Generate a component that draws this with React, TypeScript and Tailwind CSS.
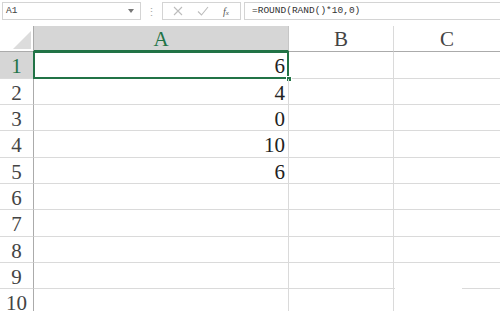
import { ReactNode } from 'react';

const ROW_HEIGHTS = [27, 26, 26, 27, 26, 26, 27, 26, 26, 27];
const VALUES: Record<number, string> = { 1: '6', 2: '4', 3: '0', 4: '10', 5: '6' };

const serif = { fontFamily: '"Liberation Serif", "Noto Sans CJK SC", serif' };
const mono = { fontFamily: '"Liberation Mono", "DejaVu Sans Mono", monospace' };

function Cell({ children, className = '' }: { children?: ReactNode; className?: string }) {
  return <div className={`border-r border-b border-[#dadada] ${className}`}>{children}</div>;
}

export default function App() {
  return (
    <div className="relative w-[500px] h-[311px] overflow-hidden bg-white text-[#333]">
      {/* formula bar */}
      <div className="flex items-center h-[26px] pt-[2px] pb-[6px] pl-[2px]">
        <div className="flex items-center justify-between w-[139px] h-[18px] border border-[#d4d4d4] px-[3px]">
          <span className="text-[9.5px] text-[#444]" style={mono}>A1</span>
          <svg width="6" height="4" viewBox="0 0 6 4" className="mr-[3px]">
            <path d="M0 0h6L3 4z" fill="#777" />
          </svg>
        </div>
        <div className="w-[21px] flex justify-center text-[#aaa] text-[11px] leading-none">⋮</div>
        <div className="flex items-center w-[79px] h-[18px] border border-[#d4d4d4] text-[#c2c2c2]">
          <svg width="10" height="10" viewBox="0 0 10 10" className="ml-[10px]">
            <path d="M1 1l8 8M9 1l-8 8" stroke="#bdbdbd" strokeWidth="1.1" />
          </svg>
          <svg width="12" height="10" viewBox="0 0 12 10" className="ml-[14px]">
            <path d="M1 5.5l3.5 3.5L11 1" stroke="#bdbdbd" strokeWidth="1.1" fill="none" />
          </svg>
          <span className="ml-[14px] text-[10px] italic text-[#555]" style={serif}>
            f<span className="text-[7px]">x</span>
          </span>
        </div>
        <div className="ml-[3px] flex-1 h-[18px] border border-[#d4d4d4] border-r-0 flex items-center pl-[7px]">
          <span className="text-[9.5px] text-[#333]" style={mono}>=ROUND(RAND()*10,0)</span>
        </div>
      </div>

      {/* sheet */}
      <div className="grid grid-cols-[34px_255px_105px_106px] leading-none" style={serif}>
        {/* corner */}
        <div className="relative h-[26px] border-r border-b border-[#ababab] bg-white">
          <svg width="18" height="18" viewBox="0 0 18 18" className="absolute right-[2px] bottom-[2px]">
            <path d="M18 0v18H0z" fill="#dcdcdc" />
          </svg>
        </div>
        <div className="h-[26px] pt-[2px] bg-[#d6d6d6] border-r border-[#c6c6c6] border-b-2 border-b-[#217346] flex items-center justify-center text-[21px] text-[#217346]">
          A
        </div>
        <div className="h-[26px] pt-[2px] bg-white border-r border-[#dadada] border-b border-b-[#ababab] flex items-center justify-center text-[21px] text-[#444]">
          B
        </div>
        <div className="h-[26px] pt-[2px] bg-white border-b border-b-[#ababab] flex items-center justify-center text-[21px] text-[#444]">
          C
        </div>

        {ROW_HEIGHTS.map((h, i) => {
          const r = i + 1;
          const sel = r === 1;
          return (
            <div key={r} className="contents">
              <div
                className={`flex items-center justify-center pt-[3px] border-r border-r-[#ababab] border-b border-[#dadada] text-[21px] ${
                  sel ? 'bg-[#d6d6d6] text-[#217346]' : 'bg-white text-[#444]'
                }`}
                style={{ height: h }}
              >
                {r}
              </div>
              <Cell className="relative flex items-center justify-end pt-[3px] pr-[3px] text-[21px] text-[#222]">
                {VALUES[r]}
                {sel && (
                  <>
                    <div className="absolute -top-[1px] -left-[1px] -right-[1px] -bottom-[1px] border-2 border-[#217346]" />
                    <div className="absolute -right-[4px] -bottom-[4px] w-[6px] h-[6px] bg-[#217346] border border-white" />
                  </>
                )}
              </Cell>
              <Cell />
              <Cell className="border-r-0" />
            </div>
          );
        })}
      </div>

      {/* erased area bottom right */}
      <div className="absolute left-[395px] top-[278px] w-[67px] h-[14px] bg-white" />
      <div className="absolute left-[395px] top-[292px] w-[75px] h-[19px] bg-white" />
    </div>
  );
}
